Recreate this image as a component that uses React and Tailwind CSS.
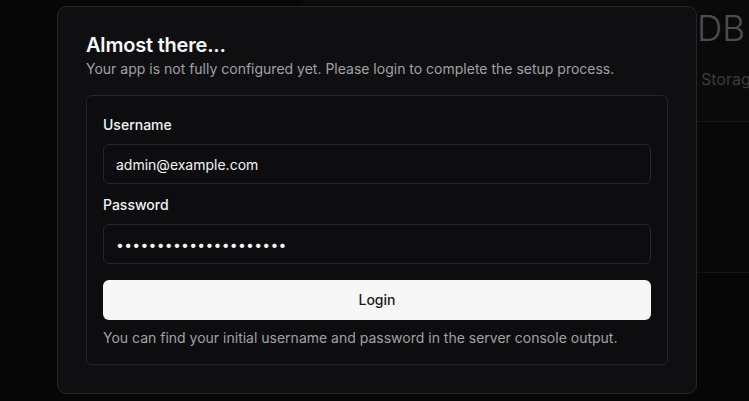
import { useState } from 'react'

export default function App() {
  const [username, setUsername] = useState('admin@example.com')
  const [password, setPassword] = useState('supersecretpassword12')

  return (
    <div className="relative min-h-screen w-full overflow-hidden bg-[#060606] font-['Inter','Liberation_Sans',sans-serif]">
      {/* ── Page behind the dialog ── */}
      <div className="flex">
        <div className="w-[300px] shrink-0" />
        <main className="flex flex-1 flex-col">
          <header className="flex h-[122px] justify-end border-b border-[#161616] bg-[#0a0a0a]">
            <div className="w-[52px] overflow-hidden pt-[6px]">
              <h1 className="whitespace-nowrap text-[35px] font-light leading-[44px] text-[#4d4d4d]">DB</h1>
              <p className="mt-[17px] whitespace-nowrap pl-1 text-[16px] leading-6 text-[#3c3c3c]">Storage</p>
            </div>
          </header>
          <section className="h-[151px] border-b border-[#141414] bg-[#080808]" />
        </main>
      </div>

      {/* ── Dialog ── */}
      <div className="absolute left-[57px] top-[6px] w-[640px] rounded-[9px] border border-[#262628] bg-[#0f0f11] px-7 pb-7 pt-6">
        <h2 className="text-[20px] font-semibold leading-7 tracking-[-0.01em] text-[#fafafa]">Almost there...</h2>
        <p className="text-sm leading-5 text-[#a1a1a6]">
          Your app is not fully configured yet. Please login to complete the setup process.
        </p>

        <form
          className="mt-4 flex flex-col rounded-md border border-[#252527] bg-[#0d0d0f] px-4 pb-4 pt-[19px]"
          onSubmit={(e) => e.preventDefault()}
        >
          <label className="flex flex-col gap-[9px]">
            <span className="text-sm font-medium leading-5 text-[#f4f4f5]">Username</span>
            <input
              type="text"
              value={username}
              onChange={(e) => setUsername(e.target.value)}
              className="h-10 w-full rounded-md border border-[#27272a] bg-[#0d0d0f] px-3 text-sm text-[#f4f4f5] outline-none"
            />
          </label>
          <label className="mt-[11px] flex flex-col gap-[9px]">
            <span className="text-sm font-medium leading-5 text-[#f4f4f5]">Password</span>
            <input
              type="password"
              value={password}
              onChange={(e) => setPassword(e.target.value)}
              className="h-10 w-full rounded-md border border-[#27272a] bg-[#0d0d0f] px-3 text-sm tracking-[0.25px] text-[#f4f4f5] outline-none"
            />
          </label>
          <button
            type="submit"
            className="mt-4 h-10 w-full rounded-md bg-[#f7f7f7] text-sm font-medium text-[#18181b]"
          >
            Login
          </button>
          <p className="mt-2 text-sm leading-5 text-[#a1a1a6]">
            You can find your initial username and password in the server console output.
          </p>
        </form>
      </div>
    </div>
  )
}
